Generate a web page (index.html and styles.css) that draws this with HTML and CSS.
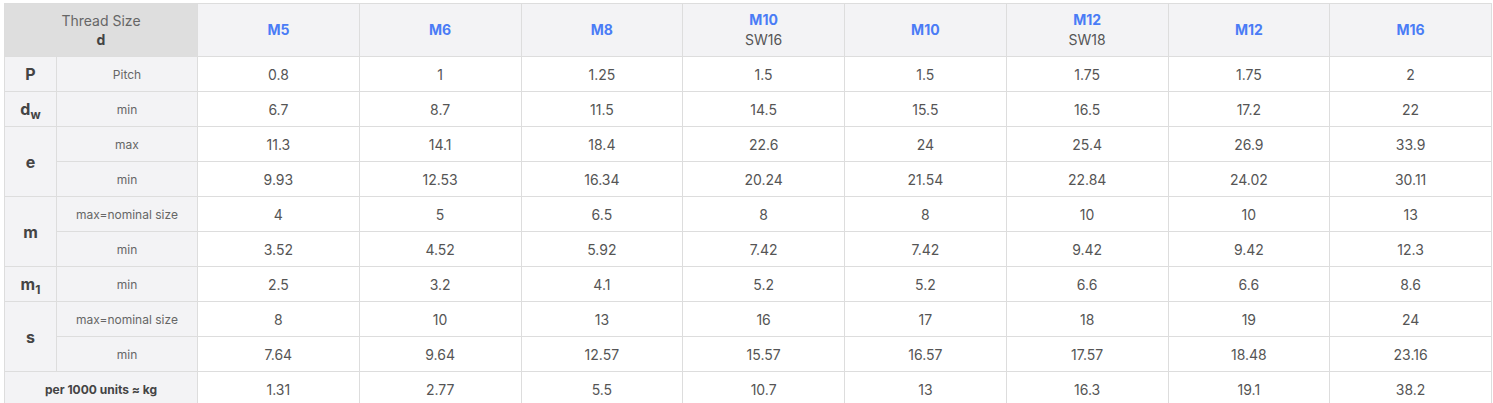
FILE: index.html
```html
<!DOCTYPE html>
<html>
<head>
<meta charset="utf-8">
<link rel="stylesheet" href="styles.css">
</head>
<body>
<table class="spec">
  <colgroup>
    <col class="c-sym"><col class="c-lab">
    <col><col><col><col><col><col><col><col>
  </colgroup>
  <thead>
    <tr class="head">
      <th colspan="2" class="corner"><span class="ts">Thread Size</span><span class="d">d</span></th>
      <th><span class="sz">M5</span></th>
      <th><span class="sz">M6</span></th>
      <th><span class="sz">M8</span></th>
      <th><span class="sz">M10</span><span class="sw">SW16</span></th>
      <th><span class="sz">M10</span></th>
      <th><span class="sz">M12</span><span class="sw">SW18</span></th>
      <th><span class="sz">M12</span></th>
      <th><span class="sz">M16</span></th>
    </tr>
  </thead>
  <tbody>
    <tr><td class="sym">P</td><td class="lab">Pitch</td><td>0.8</td><td>1</td><td>1.25</td><td>1.5</td><td>1.5</td><td>1.75</td><td>1.75</td><td>2</td></tr>
    <tr><td class="sym">d<sub>w</sub></td><td class="lab">min</td><td>6.7</td><td>8.7</td><td>11.5</td><td>14.5</td><td>15.5</td><td>16.5</td><td>17.2</td><td>22</td></tr>
    <tr><td class="sym" rowspan="2">e</td><td class="lab">max</td><td>11.3</td><td>14.1</td><td>18.4</td><td>22.6</td><td>24</td><td>25.4</td><td>26.9</td><td>33.9</td></tr>
    <tr><td class="lab">min</td><td>9.93</td><td>12.53</td><td>16.34</td><td>20.24</td><td>21.54</td><td>22.84</td><td>24.02</td><td>30.11</td></tr>
    <tr><td class="sym" rowspan="2">m</td><td class="lab">max=nominal size</td><td>4</td><td>5</td><td>6.5</td><td>8</td><td>8</td><td>10</td><td>10</td><td>13</td></tr>
    <tr><td class="lab">min</td><td>3.52</td><td>4.52</td><td>5.92</td><td>7.42</td><td>7.42</td><td>9.42</td><td>9.42</td><td>12.3</td></tr>
    <tr><td class="sym">m<sub>1</sub></td><td class="lab">min</td><td>2.5</td><td>3.2</td><td>4.1</td><td>5.2</td><td>5.2</td><td>6.6</td><td>6.6</td><td>8.6</td></tr>
    <tr><td class="sym" rowspan="2">s</td><td class="lab">max=nominal size</td><td>8</td><td>10</td><td>13</td><td>16</td><td>17</td><td>18</td><td>19</td><td>24</td></tr>
    <tr><td class="lab">min</td><td>7.64</td><td>9.64</td><td>12.57</td><td>15.57</td><td>16.57</td><td>17.57</td><td>18.48</td><td>23.16</td></tr>
    <tr><td class="sym weight" colspan="2">per 1000 units ≈ kg</td><td>1.31</td><td>2.77</td><td>5.5</td><td>10.7</td><td>13</td><td>16.3</td><td>19.1</td><td>38.2</td></tr>
  </tbody>
</table>
</body>
</html>
```

FILE: styles.css
```css
html, body {
  margin: 0;
  padding: 0;
  background: #ffffff;
}
body {
  padding: 3px 0 0 4px;
  font-family: "Inter", "Open Sans", sans-serif;
  color: #555555;
}
.spec {
  width: 1488px;
  border-collapse: collapse;
  table-layout: fixed;
}
.c-sym { width: 52px; }
.c-lab { width: 141px; }
.spec th, .spec td {
  border: 1px solid #dddddd;
  text-align: center;
  vertical-align: middle;
  padding: 0;
}
.spec td {
  height: 34px;
  font-size: 14px;
  color: #555555;
  background: #ffffff;
}
.head th {
  height: 52px;
  background: #f3f3f5;
  font-weight: 400;
}
.head th.corner {
  background: #dedede;
}
.ts, .d, .sz, .sw {
  display: block;
}
.ts {
  font-size: 14px;
  color: #666666;
  line-height: 19px;
}
.d {
  font-size: 14px;
  font-weight: 700;
  color: #444444;
  line-height: 19px;
}
.sz {
  font-size: 14px;
  font-weight: 700;
  color: #4a7cf6;
  line-height: 20px;
}
.sw {
  font-size: 14px;
  color: #555555;
  line-height: 20px;
}
.spec td.sym {
  background: #f3f3f5;
  font-size: 16px;
  font-weight: 700;
  color: #444444;
}
.spec td.sym sub {
  font-size: 12px;
  vertical-align: -4px;
  line-height: 0;
}
.spec td.lab {
  background: #f3f3f5;
  font-size: 12px;
  color: #666666;
}
.spec td.weight {
  font-size: 12px;
}
```
